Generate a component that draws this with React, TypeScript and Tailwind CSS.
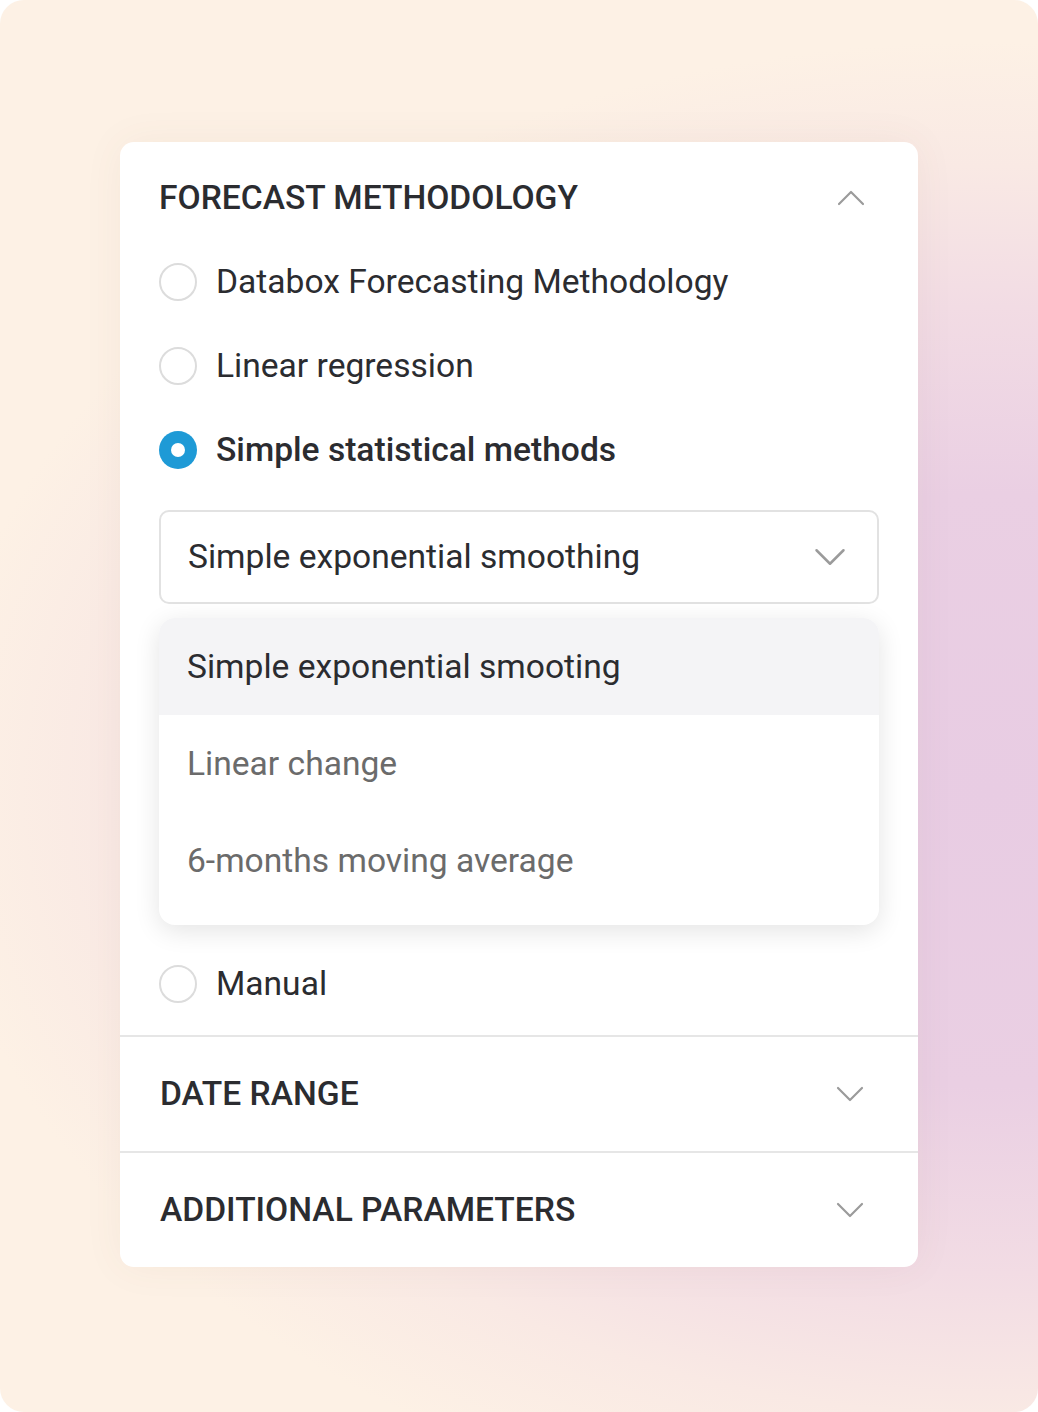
import React from "react"

const font = { fontFamily: "Roboto, 'Noto Sans', sans-serif" }

function Chevron({ up = false, className = "" }: { up?: boolean; className?: string }) {
  return (
    <svg viewBox="0 0 28 16" className={className} fill="none" stroke="#9b9b9b" strokeWidth="2.2" strokeLinecap="round" strokeLinejoin="round">
      {up ? <path d="M2 14 L14 2 L26 14" /> : <path d="M2 2 L14 14 L26 2" />}
    </svg>
  )
}

function Radio({ label, checked = false }: { label: string; checked?: boolean }) {
  return (
    <div className="flex h-[84px] items-center gap-[19px]">
      {checked ? (
        <span className="flex h-[38px] w-[38px] items-center justify-center rounded-full bg-[#1e9ad6]">
          <span className="h-[14px] w-[14px] rounded-full bg-white" />
        </span>
      ) : (
        <span className="h-[38px] w-[38px] rounded-full border-2 border-[#dcdcdc] bg-white" />
      )}
      <span className={`text-[33.6px] leading-none text-[#2b2c30] ${checked ? "font-medium" : "font-normal"}`}>{label}</span>
    </div>
  )
}

function Section({ title }: { title: string }) {
  return (
    <div className="flex h-[116px] items-center justify-between border-t-2 border-[#e6e6e6] pl-[40px] pr-[54px]">
      <span className="text-[33.6px] font-medium leading-none text-[#2b2c30]">{title}</span>
      <Chevron className="h-[16px] w-[28px]" />
    </div>
  )
}

export default function App() {
  const options = ["Simple exponential smooting", "Linear change", "6-months moving average"]
  return (
    <div className="h-[1412px] w-[1038px] bg-white" style={font}>
      <div className="flex h-full w-full justify-center overflow-hidden rounded-[24px] bg-[#fdf1e5] bg-[radial-gradient(ellipse_1100px_780px_at_990px_790px,#e8cce3_0%,#eacfe3_38%,#f2dce4_62%,#f9e9e4_80%,#fdf1e5_96%)] pt-[142px]">
        <div className="h-fit w-[798px] rounded-[14px] bg-white shadow-[0_0_40px_rgba(120,80,60,0.06)]">
          <div className="px-[39px] pb-[9px] pt-[36px]">
            <div className="flex h-[40px] items-center justify-between pr-[14px]">
              <span className="text-[33.6px] font-medium leading-none text-[#2b2c30]">FORECAST METHODOLOGY</span>
              <Chevron up className="h-[16px] w-[28px]" />
            </div>
            <div className="mt-[22px]">
              <Radio label="Databox Forecasting Methodology" />
              <Radio label="Linear regression" />
              <Radio label="Simple statistical methods" checked />
            </div>
            <div className="mt-[18px] flex h-[94px] items-center justify-between rounded-[10px] border-2 border-[#e2e2e2] pl-[27px] pr-[30px]">
              <span className="text-[33.6px] leading-none text-[#2b2c30]">Simple exponential smoothing</span>
              <Chevron className="h-[18px] w-[34px]" />
            </div>
            <div className="mt-[14px] overflow-hidden rounded-[16px] bg-white pb-[16px] shadow-[0_6px_26px_rgba(0,0,0,0.11)]">
              {options.map((o, i) => (
                <div
                  key={o}
                  className={`flex h-[97px] items-center pl-[28px] text-[33.6px] leading-none ${i === 0 ? "bg-[#f4f4f6] text-[#2b2c30]" : "text-[#6b6b6b]"}`}
                >
                  {o}
                </div>
              ))}
            </div>
            <div className="mt-[17px]">
              <Radio label="Manual" />
            </div>
          </div>
          <Section title="DATE RANGE" />
          <Section title="ADDITIONAL PARAMETERS" />
        </div>
      </div>
    </div>
  )
}
